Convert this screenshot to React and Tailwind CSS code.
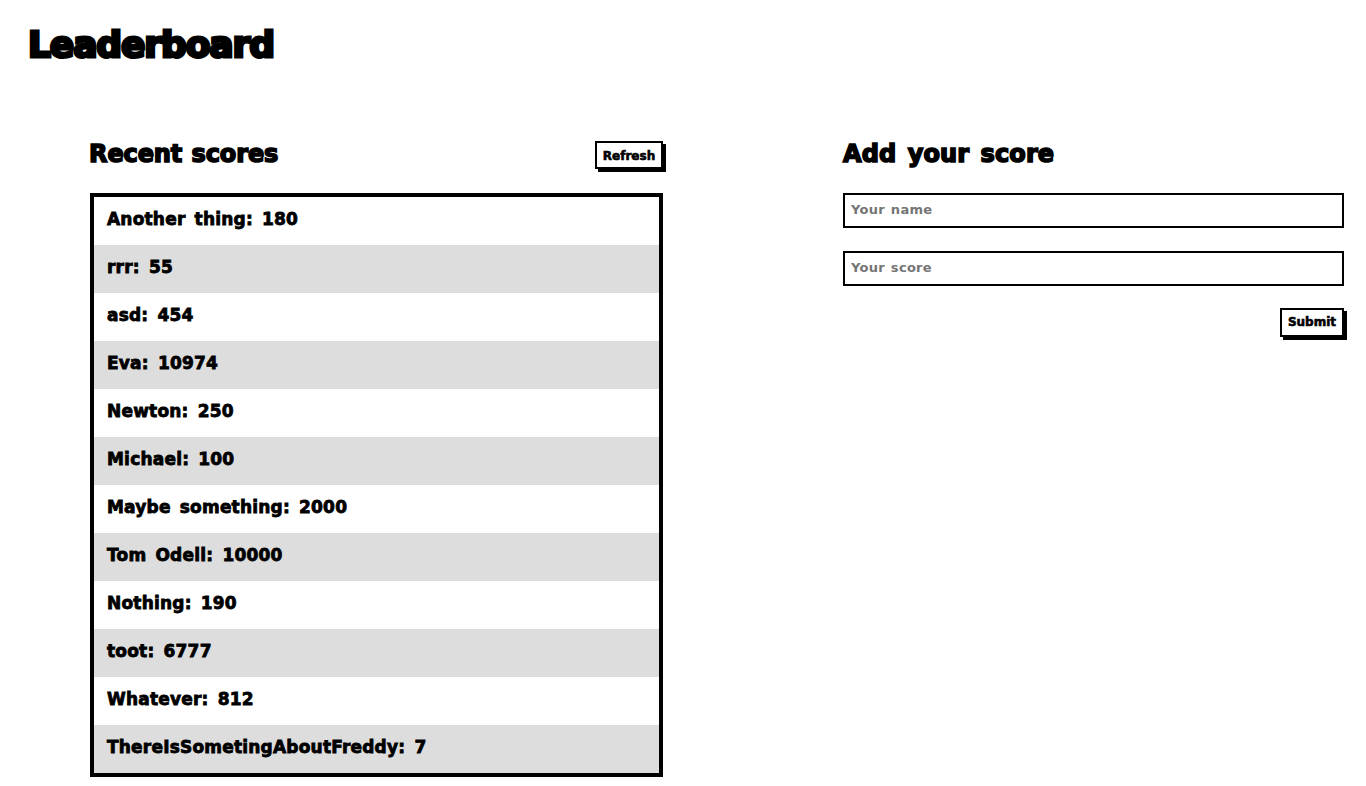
import React from 'react'

const scores = [
	['Another thing', 180],
	['rrr', 55],
	['asd', 454],
	['Eva', 10974],
	['Newton', 250],
	['Michael', 100],
	['Maybe something', 2000],
	['Tom Odell', 10000],
	['Nothing', 190],
	['toot', 6777],
	['Whatever', 812],
	['ThereIsSometingAboutFreddy', 7],
]

const App = () => {
	return (
		<div className="min-h-[786px] bg-white text-black font-['DejaVu_Sans',sans-serif] font-bold">
			{/*----------Page title---------*/}
			<h1 className="pl-[28px] pt-[21px] h-[141px] text-[36px] leading-[48px] tracking-[-1.1px] [-webkit-text-stroke:3px_black]">
				Leaderboard
			</h1>

			<div className="flex pl-[90px] gap-[180px]">
				{/*----------Recent scores---------*/}
				<div className="w-[573px]">
					<div className="flex justify-between items-start h-[52px]">
						<h2 className="-ml-px text-[24px] leading-[24px] mt-[1px] tracking-[-0.1px] [word-spacing:1px] [-webkit-text-stroke:1.6px_black]">Recent scores</h2>
						<button className="h-[28px] w-[68px] pt-[2px] border-2 border-black bg-white text-[12px] leading-none [-webkit-text-stroke:0.6px_black] shadow-[3px_3px_0_#000]">
							Refresh
						</button>
					</div>
					<ul className="border-4 border-black">
						{scores.map(([name, score], i) => (
							<li
								key={name}
								className={`h-[48px] pl-[13px] pt-[10px] text-[17px] leading-[24px] tracking-[0.2px] [word-spacing:3px] [-webkit-text-stroke:0.8px_black] ${i % 2 ? 'bg-[#dddddd]' : 'bg-white'}`}
							>
								{name}: {score}
							</li>
						))}
					</ul>
				</div>

				{/*----------Add your score---------*/}
				<div className="w-[501px]">
					<h2 className="h-[52px] text-[24px] leading-[24px] mt-[1px] -mb-[1px] tracking-[0.1px] [word-spacing:3px] [-webkit-text-stroke:1.6px_black]">Add your score</h2>
					<input
						placeholder="Your name"
						className="block w-full h-[35px] border-2 border-black px-[6px] pb-[3px] text-[13px] tracking-[0.3px] [word-spacing:1px] placeholder:text-[#757575] outline-none"
					/>
					<input
						placeholder="Your score"
						className="block w-full h-[35px] mt-[23px] border-2 border-black px-[6px] pb-[3px] text-[13px] tracking-[0.3px] [word-spacing:1px] placeholder:text-[#757575] outline-none"
					/>
					<div className="flex justify-end mt-[22px]">
						<button className="h-[29px] w-[64px] pb-[1px] border-2 border-black bg-white text-[12px] leading-none [-webkit-text-stroke:0.6px_black] shadow-[3px_3px_0_#000]">
							Submit
						</button>
					</div>
				</div>
			</div>
		</div>
	)
}

export default App
